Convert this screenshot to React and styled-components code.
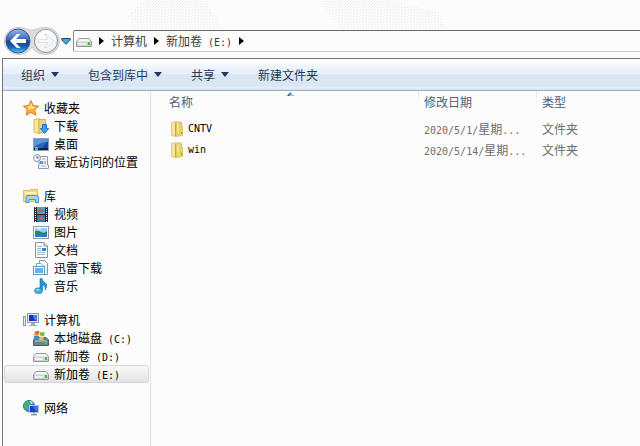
import React from 'react';
import styled, { createGlobalStyle } from 'styled-components';

const groups = [
  {
    title: '收藏夹',
    icon: 'star',
    items: [
      { icon: 'download', label: '下载' },
      { icon: 'desktop', label: '桌面' },
      { icon: 'recent', label: '最近访问的位置' },
    ],
  },
  {
    title: '库',
    icon: 'library',
    items: [
      { icon: 'video', label: '视频' },
      { icon: 'picture', label: '图片' },
      { icon: 'document', label: '文档' },
      { icon: 'thunder', label: '迅雷下载' },
      { icon: 'music', label: '音乐' },
    ],
  },
  {
    title: '计算机',
    icon: 'computer',
    items: [
      { icon: 'system', label: '本地磁盘', drive: ' (C:)' },
      { icon: 'drive', label: '新加卷', drive: ' (D:)' },
      { icon: 'drive', label: '新加卷', drive: ' (E:)', selected: true },
    ],
  },
  { title: '网络', icon: 'network', items: [] },
];

const files = [
  { name: 'CNTV', date: '2020/5/1/', type: '文件夹' },
  { name: 'win', date: '2020/5/14/', type: '文件夹' },
];

const commands = [
  { label: '组织', menu: true },
  { label: '包含到库中', menu: true },
  { label: '共享', menu: true },
  { label: '新建文件夹' },
];

const shapes = {
  star: (
    <>
      <path d="M8 .6 10.2 5.6 15.6 6.2 11.6 9.8 13 15.2 8 12.4 3.2 15.2 4.3 9.8.4 6.2 5.8 5.6Z" fill="#f9b233" stroke="#dd7a2c" />
      <path d="M8 2.6 9.4 6.6 13 7 9.8 9 8 8.4 5.4 10 5.6 7.6 3 7 6.6 6.4Z" fill="#ffe58a" />
    </>
  ),
  download: (
    <>
      <path d="M1 1.5 6 .5V15.5L1 14Z" fill="#f7e795" stroke="#d8bd62" />
      <path d="M6 1.5H12.5V14L6 15.5Z" fill="#ecd67c" stroke="#d3b558" />
      <path d="M9.5 6.5H13.5V10.5H15.6L11.5 15.5 7.4 10.5H9.5Z" fill="#35a5e8" stroke="#1b70b8" />
    </>
  ),
  desktop: (
    <>
      <rect x=".5" y="2.5" width="15" height="12" fill="#2b64b9" stroke="#8da0b5" />
      <path d="M1 3H15V6Q8 6 1 11Z" fill="#5d93d8" />
      <path d="M9 12 15 5V12Z" fill="#1c448f" />
      <path d="M1 12H15V14H1Z" fill="#14233c" />
      <rect x="2" y="11" width="3" height="3" fill="#37b6e9" />
      <rect x="3" y="11" width="1" height="1" fill="#f39d32" />
    </>
  ),
  recent: (
    <>
      <path d="M6 2.5H14.5V11H15.5V14.5H5.5V12H6Z" fill="#f4f6f8" stroke="#8e9ba8" />
      <circle cx="4" cy="4" r="3.5" fill="#eef4f8" stroke="#8997a5" />
      <path d="M4 2V4H6" fill="none" stroke="#526878" />
      <path d="M9 5H13M8 12H13" stroke="#a2b4c2" />
      <rect x="7" y="7" width="3" height="3" fill="#45a1d8" />
      <rect x="11" y="7" width="2" height="3" fill="#87c3e7" />
    </>
  ),
  library: (
    <>
      <path d="M.5 2.5H6.5L8 1.5H14.5V13.5H.5Z" fill="#f3dc7f" stroke="#d9bd68" />
      <path d="M2 4H13V6H2Z" fill="#fff6c4" />
      <path d="M3 14.5V9.5Q3 7.5 5 7.5H13.5Q15.5 7.5 15.5 9.5V14.5H12.5V11.5H6V14.5Z" fill="#9ed6f4" stroke="#4296ca" />
    </>
  ),
  video: (
    <>
      <rect x="1" y="1" width="14" height="15" fill="#202a32" />
      <rect x="4" y="1" width="8" height="7" fill="#4f9ed0" />
      <rect x="4" y="9" width="8" height="7" fill="#3775aa" />
      <path d="M5 4Q8 1 9 4L11 3V6L8 6 5 7ZM5 14 7 11 9 10 11 12V14Z" fill="#b9664c" />
      <path d="M2.5 1V16M13.5 1V16" stroke="#e8eff3" strokeDasharray="1 1" />
    </>
  ),
  picture: (
    <>
      <rect x=".5" y="2.5" width="15" height="12" fill="#fff" stroke="#8d98a3" />
      <rect x="2" y="4" width="12" height="9" fill="#8bd0f0" />
      <path d="M2 7Q5 6 8 8T14 7V10H2Z" fill="#357f55" />
      <path d="M2 10H14V13H2Z" fill="#2f7db8" />
      <path d="M4 5H8" stroke="#fff" />
    </>
  ),
  document: (
    <>
      <path d="M2.5.5H11L14.5 4V15.5H2.5Z" fill="#fbfcfd" stroke="#8794a1" />
      <path d="M11 .5V4H14.5" fill="#dce4eb" stroke="#8794a1" />
      <path d="M4 4.5H9M4 6.5H8M4 8.5H8M4 10.5H12M4 12.5H12" stroke="#a8b4c0" />
      <rect x="9" y="6" width="4" height="3" fill="#2f8acb" />
    </>
  ),
  thunder: (
    <>
      <path d="M6.5.5H11.5L14.5 3.5V14.5H6.5Z" fill="#f4f9fc" stroke="#8097a8" />
      <path d="M3.5 3.5H8L10.5 6V12H3.5Z" fill="#fff" stroke="#8ba1b0" />
      <rect x=".5" y="6.5" width="11" height="8" fill="#fff" stroke="#6695b6" />
      <rect x="2" y="8" width="8" height="5" fill="#62b5e5" />
    </>
  ),
  music: (
    <>
      <path d="M7 .6H9Q9 3 12 4.5 15.5 7 12 12 13 8 9.5 7V13H7Z" fill="#2493d8" stroke="#1d73b5" strokeWidth=".6" />
      <ellipse cx="5.5" cy="12.7" rx="4" ry="2.9" fill="#3faae8" stroke="#1d73b5" strokeWidth=".6" />
      <ellipse cx="4.8" cy="11.8" rx="1.7" ry="1" fill="#95d9fa" />
    </>
  ),
  computer: (
    <>
      <rect x=".5" y="4.5" width="2" height="9" fill="#eceff1" stroke="#8b98a3" />
      <rect x="4.5" y="1.5" width="11" height="9" fill="#dfe5e9" stroke="#919da6" />
      <rect x="6" y="3" width="8" height="6" fill="#1634b8" />
      <path d="M10 3H14V9Q10 8 10 3Z" fill="#527cf0" />
      <path d="M8 11H12V13H14V14H6V13H8Z" fill="#a4aeb5" />
    </>
  ),
  drive: (
    <>
      <path d="M3 5.5H13L15.5 8.5V13.5H.5V8.5Z" fill="#cfd1d2" stroke="#96999b" />
      <path d="M3.2 6H12.8L14.5 8.5H1.5Z" fill="#f5f5f5" />
      <path d="M2 11H10" stroke="#f2f2f2" strokeWidth="2" />
      <rect x="12" y="9" width="2" height="3" fill="#45bd36" />
    </>
  ),
  system: (
    <>
      <path d="M3 7.5H13L15.5 10V15.5H.5V10Z" fill="#668694" stroke="#495d67" />
      <path d="M2 11H14" stroke="#b9c9d0" />
      <rect x="12" y="12" width="2" height="2" fill="#43cf40" />
      <path d="M2 2Q4 0 6.5 1.5L6 5Q4 4 1 5Z" fill="#ec6a31" />
      <path d="M7.3 1.8Q9 3 12 2L11 5.7Q9 6.5 6.8 5.3Z" fill="#73bb3b" />
      <path d="M1 6Q4 4.7 6 6L5.3 9.5Q3 8 .5 9Z" fill="#378ed1" />
      <path d="M6.7 6.2Q9 7.4 11 6.4L10 10Q8 11 6 9.8Z" fill="#f3bd2e" />
    </>
  ),
  network: (
    <>
      <circle cx="6" cy="6" r="5.5" fill="#3695d9" stroke="#2474a6" />
      <path d="M1 5Q2 1 6 1L7 3 4 5 5 8 3 10Q1 8 1 5Z" fill="#50b54c" />
      <path d="M7 1Q9 1 10 3L8 4Z" fill="#c9effd" />
      <rect x="6.5" y="5.5" width="9" height="7" fill="#1744bd" stroke="#b3bfca" />
      <path d="M10 6H15V12Q11 11 10 6Z" fill="#3e73e4" />
      <path d="M10 13H12V14H14V15.5H8V14H10Z" fill="#889fae" />
    </>
  ),
  folder: (
    <>
      <path d="M2.5 1.5 7 .5V15.5L2.5 14.5Z" fill="#f6e798" stroke="#e0cb78" />
      <path d="M7 1H12.5V5H13.5V14.5L7 15.5Z" fill="#e7cf6d" stroke="#dcc36a" />
      <path d="M6.5 2V15.5" stroke="#c3a653" />
      <path d="M9 2V13" stroke="#f5e08c" strokeWidth="2" />
      <rect x="12" y="11" width="1" height="2" fill="#48aac0" />
    </>
  ),
};

const Icon = ({ name }) => (
  <Glyph viewBox="0 0 16 16" aria-hidden="true">{shapes[name]}</Glyph>
);

const Arrow = () => (
  <svg width="5" height="8" viewBox="0 0 5 8" aria-hidden="true">
    <path d="M0 0 5 4 0 8Z" fill="#000" />
  </svg>
);

const Reflection = () => (
  <Glass aria-hidden="true">
    <defs>
      <pattern id="dots" width="3" height="3" patternUnits="userSpaceOnUse">
        <path d="M0 0H1V1H0ZM2 1H3V2H2Z" fill="#ececec" />
      </pattern>
    </defs>
    <path d="M142 1H206L222 28H134L127 16Z" fill="url(#dots)" />
    <path d="M320 1H390L438 12 448 28H340Z" fill="url(#dots)" />
  </Glass>
);

const NavBar = () => (
  <Nav>
    <Reflection />
    <History>
      <Plate viewBox="0 0 56 28" aria-hidden="true">
        <path d="M14 .5Q20 .5 24 2.5 28 4 32 2.5 36 .5 42 .5A13.5 13.5 0 0 1 42 27.5Q33 27.5 28 20 23 27.5 14 27.5A13.5 13.5 0 0 1 14 .5Z" fill="#dcdcdc" stroke="#c8c8c8" />
      </Plate>
      <RoundButton aria-label="后退">
        <svg width="26" height="26" viewBox="0 0 26 26">
          <defs>
            <linearGradient id="ball" x1="0" y1="0" x2="0" y2="1">
              <stop offset="0" stopColor="#9ab7e2" />
              <stop offset=".46" stopColor="#3563b4" />
              <stop offset=".5" stopColor="#10408f" />
              <stop offset=".75" stopColor="#1b62b7" />
              <stop offset="1" stopColor="#41d2f5" />
            </linearGradient>
          </defs>
          <circle cx="13" cy="13" r="12" fill="url(#ball)" stroke="#375a8f" />
          <path d="M5 13 12 6H15.5L11 11H21V15H11L15.5 20H12Z" fill="#fff" />
        </svg>
      </RoundButton>
      <RoundButton aria-label="前进">
        <svg width="26" height="26" viewBox="0 0 26 26">
          <circle cx="13" cy="13" r="11.5" fill="#f3f4f5" stroke="#8b9096" />
          <path d="M3 12A10 10 0 0 1 23 12Q13 15 3 12Z" fill="#fdfdfd" />
          <path d="M21 13 14 6.5H11.5L15 11.5H5.5V14.5H15L11.5 19.5H14Z" fill="#f8f8f8" stroke="#dfe0e0" />
        </svg>
      </RoundButton>
      <RecentButton aria-label="最近的位置">
        <svg width="10" height="7" viewBox="0 0 10 7">
          <path d="M.8.5H9.2V2L5 6.3.8 2Z" fill="#4aa5d8" stroke="#174a74" />
        </svg>
      </RecentButton>
    </History>
    <Address aria-label="地址">
      <Icon name="drive" />
      <Arrow />
      <Crumb href="#computer">计算机</Crumb>
      <Arrow />
      <Crumb href="#e">新加卷<Latin> (E:)</Latin></Crumb>
      <Arrow />
    </Address>
  </Nav>
);

const App = () => (
  <>
    <GlobalStyle />
    <Page>
      <NavBar />
      <Frame>
        <Toolbar>
          {commands.map((command) => (
            <Command key={command.label}>
              {command.label}
              {command.menu && (
                <svg width="8" height="5" viewBox="0 0 8 5" aria-hidden="true">
                  <path d="M0 0H8L4 5Z" fill="#1e395b" />
                </svg>
              )}
            </Command>
          ))}
        </Toolbar>
        <Content>
          <Sidebar>
            {groups.map((group) => (
              <Group key={group.title}>
                <Entry href={`#${group.icon}`}>
                  <Icon name={group.icon} />
                  {group.title}
                </Entry>
                {group.items.map((item) => (
                  <Entry
                    key={item.label + (item.drive || '')}
                    href={`#${item.icon}`}
                    $child
                    $selected={item.selected}
                  >
                    <Icon name={item.icon} />
                    <span>{item.label}{item.drive && <Latin>{item.drive}</Latin>}</span>
                  </Entry>
                ))}
              </Group>
            ))}
          </Sidebar>
          <Listing>
            <Table>
              <thead>
                <tr>
                  <Heading $width="267px" $indent="18px">
                    名称
                    <SortMark viewBox="0 0 7 4" aria-hidden="true">
                      <path d="M0 4 3.5 0 7 4Z" fill="#8cc3e6" />
                      <path d="M0 4 3.5 0V2L2 4Z" fill="#2f5b86" />
                    </SortMark>
                  </Heading>
                  <Heading $width="118px" $indent="6px">修改日期</Heading>
                  <Heading $indent="6px">类型</Heading>
                </tr>
              </thead>
              <tbody>
                {files.map((file) => (
                  <tr key={file.name}>
                    <Cell $indent="18px">
                      <FileName>
                        <Icon name="folder" />
                        <Latin>{file.name}</Latin>
                      </FileName>
                    </Cell>
                    <Cell $indent="6px" $muted><Latin>{file.date}</Latin>星期<Latin>...</Latin></Cell>
                    <Cell $indent="6px" $muted>{file.type}</Cell>
                  </tr>
                ))}
              </tbody>
            </Table>
          </Listing>
        </Content>
      </Frame>
    </Page>
  </>
);

const GlobalStyle = createGlobalStyle`
  * {
    box-sizing: border-box;
  }

  body {
    margin: 0;
    background: #fcfcfc;
    color: #000;
    font-family: 'Noto Sans CJK SC', sans-serif;
    font-size: 12px;
    line-height: 18px;
  }

  button {
    border: none;
    padding: 0;
    background: none;
    color: inherit;
    font: inherit;
    cursor: pointer;
  }

  a {
    color: inherit;
    text-decoration: none;
  }
`

const Page = styled.div`
  display: flex;
  flex-direction: column;
  min-height: 100vh;
`

const Latin = styled.span`
  font-family: 'DejaVu Sans Mono', monospace;
  font-size: 10px;
  line-height: 10px;
  white-space: pre;
`

const Glyph = styled.svg`
  flex: none;
  width: 16px;
  height: 16px;
`

const Nav = styled.header`
  position: relative;
  display: flex;
  align-items: center;
  gap: 2px;
  height: 58px;
  padding: 24px 0 0 5px;
`

const Glass = styled.svg`
  position: absolute;
  inset: 0;
  width: 100%;
  height: 30px;
`

const History = styled.div`
  position: relative;
  display: flex;
  align-items: center;
  gap: 2px;
`

const Plate = styled.svg`
  position: absolute;
  left: -1px;
  width: 56px;
  height: 28px;
`

const RoundButton = styled.button`
  position: relative;
  display: flex;
  border-radius: 50%;
`

const RecentButton = styled.button`
  display: flex;
  padding: 4px 0;
`

const Address = styled.nav`
  position: relative;
  flex: 1;
  display: flex;
  align-items: center;
  gap: 7px;
  height: 22px;
  padding-left: 2px;
  background: #fcfcfc;
  border: 1px solid #8b8b8b;
  border-top-color: #666;
  border-bottom-color: #c8c8c8;
  border-right: none;
  border-radius: 2px 0 0 2px;
`

const Crumb = styled.a`
  color: #3c3c3c;
`

const Frame = styled.div`
  flex: 1;
  display: flex;
  flex-direction: column;
  margin-left: 2px;
  border-top: 1px solid #777;
  border-left: 1px solid #777;
`

const Toolbar = styled.div`
  display: flex;
  align-items: center;
  gap: 29px;
  height: 32px;
  padding-left: 18px;
  border-bottom: 1px solid #9fb2cf;
  background: linear-gradient(#fcfcfc 10%, #e8f1fb 34%, #e8f1fb 48%, #dbe6f4 48%, #dbe6f4 88%, #eaf2fb 94%, #c6d5e8);
  color: #1e395b;
`

const Command = styled.button`
  display: flex;
  align-items: center;
  gap: 6px;
  white-space: nowrap;
`

const Content = styled.div`
  flex: 1;
  display: flex;
`

const Sidebar = styled.nav`
  flex: none;
  display: flex;
  flex-direction: column;
  gap: 16px;
  width: 148px;
  padding: 8px 1px;
  border-right: 1px solid #d6e5f5;
`

const Group = styled.div`
  display: flex;
  flex-direction: column;
`

const Entry = styled.a`
  display: flex;
  align-items: center;
  gap: 5px;
  height: 18px;
  padding-left: ${({ $child }) => ($child ? '28px' : '18px')};
  border: 1px solid ${({ $selected }) => ($selected ? '#d5d5d5' : 'transparent')};
  border-radius: 3px;
  background: ${({ $selected }) => ($selected ? 'linear-gradient(#fafafa, #e3e3e3)' : 'none')};
  white-space: nowrap;
`

const Listing = styled.main`
  flex: 1;
  min-width: 0;
`

const Table = styled.table`
  width: 100%;
  table-layout: fixed;
  border-collapse: collapse;
`

const Heading = styled.th`
  position: relative;
  width: ${({ $width }) => $width || 'auto'};
  height: 27px;
  padding: 2px 0 0 ${({ $indent }) => $indent};
  color: #4c607a;
  font-weight: 400;
  text-align: left;
  vertical-align: top;

  & + & {
    background: linear-gradient(#d6e5f5, #fcfcfc) left top / 1px 14px no-repeat;
  }
`

const SortMark = styled.svg`
  position: absolute;
  top: 1px;
  left: 51%;
  width: 7px;
  height: 4px;
`

const Cell = styled.td`
  height: 21px;
  padding: 0 0 0 ${({ $indent }) => $indent};
  color: ${({ $muted }) => ($muted ? '#6d6d6d' : '#000')};
  white-space: nowrap;
`

const FileName = styled.div`
  display: flex;
  align-items: center;
  gap: 3px;
`

export default App;
